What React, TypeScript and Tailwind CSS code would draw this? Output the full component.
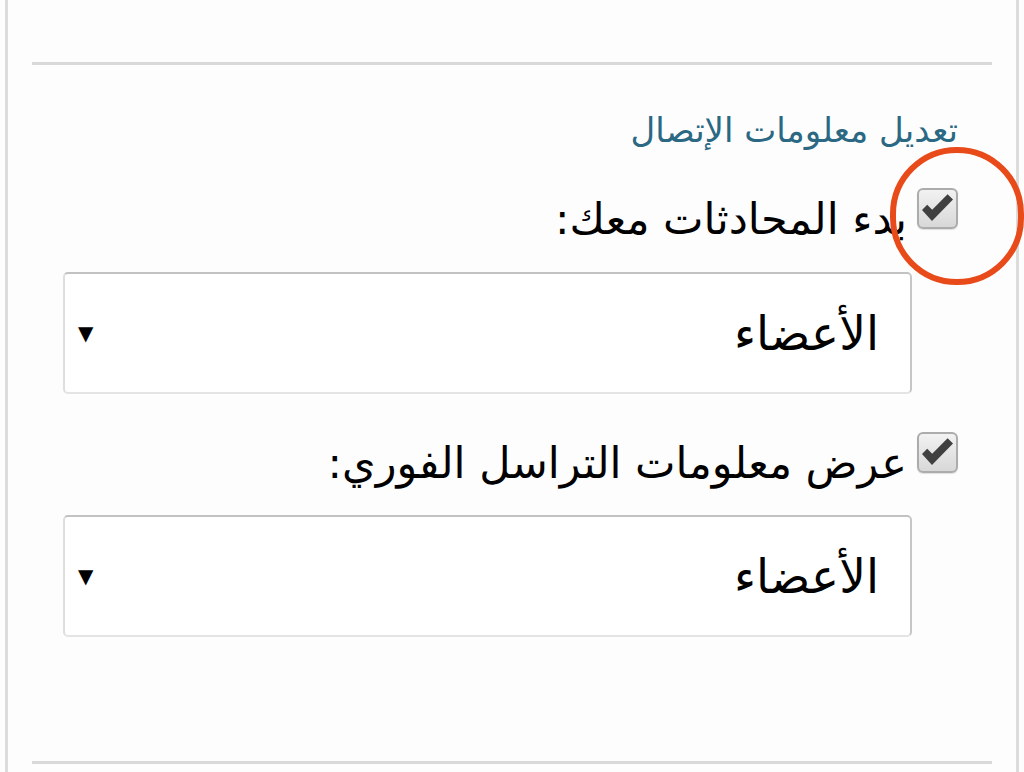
const font = { fontFamily: '"DejaVu Sans", "Noto Sans", sans-serif' };

function CheckBox() {
  return (
    <span className="flex h-[41px] w-[41px] shrink-0 rounded-[6px] border-2 border-[#acacac] bg-gradient-to-b from-[#f2f2f2] to-[#d8d8d8] shadow-[0_1px_1px_rgba(0,0,0,0.12)]">
      <svg viewBox="0 0 37 37" className="h-full w-full">
        <path d="M3 20l5.2-5.2 5 5L28.6 4.2l5.4 5.3L13 31z" fill="#404040" />
      </svg>
    </span>
  );
}

function SelectBox({ value }: { value: string }) {
  return (
    <div className="mr-[46px] flex h-[122px] w-[849px] items-center justify-between rounded-[5px] border-2 border-[#e4e4e4] border-t-[#c2c2c2] border-l-[#dedede] border-r-[#c6c6c6] bg-white pl-[13px] pr-[31px]">
      <span className="text-[47px] leading-none text-black">{value}</span>
      <span className="text-[20px] leading-none text-black">▼</span>
    </div>
  );
}

export default function App() {
  return (
    <div className="h-[772px] w-[1024px] overflow-hidden bg-[#fdfdfd]" style={font}>
      <div className="relative ml-[5px] h-full w-[1014px] border-x-[3px] border-[#dcdcdc] px-[24px]">
        <div className="pt-[62px]">
          <div className="h-[3px] bg-[#d9d9d9]" />
        </div>
        <div dir="rtl" className="pr-[34px] pt-[48px]">
          <h2 className="text-[34px] font-normal leading-none text-[#2a6883]">تعديل معلومات الإتصال</h2>
          <div className="mt-[41px] flex items-start gap-[10px]">
            <CheckBox />
            <span className="mt-[10px] text-[43px] leading-none text-black">بدء المحادثات معك:</span>
          </div>
          <div className="mt-[31px]">
            <SelectBox value="الأعضاء" />
          </div>
          <div className="mt-[38px] flex items-start gap-[10px]">
            <CheckBox />
            <span className="mt-[10px] text-[43px] leading-none text-black">عرض معلومات التراسل الفوري:</span>
          </div>
          <div className="mt-[30px]">
            <SelectBox value="الأعضاء" />
          </div>
        </div>
        <div className="absolute bottom-[8px] left-[24px] right-[24px] h-[3px] bg-[#d9d9d9]" />
        <div className="absolute left-[882px] top-[147px] h-[138px] w-[134px] rounded-full border-[6px] border-[#e84a1a]" />
      </div>
    </div>
  );
}
